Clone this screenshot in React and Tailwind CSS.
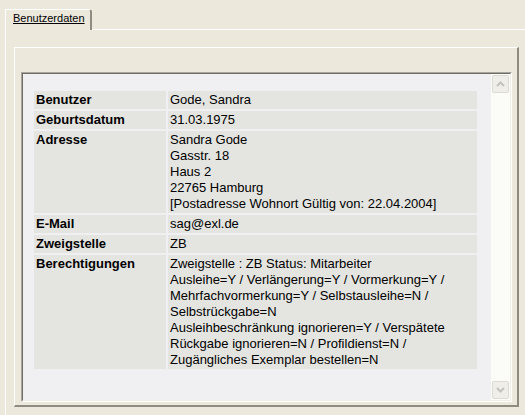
import React from "react";

const rows = [
  { label: "Benutzer", lines: ["Gode, Sandra"] },
  { label: "Geburtsdatum", lines: ["31.03.1975"] },
  {
    label: "Adresse",
    lines: [
      "Sandra Gode",
      "Gasstr. 18",
      "Haus 2",
      "22765 Hamburg",
      "[Postadresse Wohnort Gültig von: 22.04.2004]",
    ],
  },
  { label: "E-Mail", lines: ["sag@exl.de"] },
  { label: "Zweigstelle", lines: ["ZB"] },
  {
    label: "Berechtigungen",
    lines: [
      "Zweigstelle : ZB Status: Mitarbeiter",
      "Ausleihe=Y / Verlängerung=Y / Vormerkung=Y /",
      "Mehrfachvormerkung=Y / Selbstausleihe=N /",
      "Selbstrückgabe=N",
      "Ausleihbeschränkung ignorieren=Y / Verspätete",
      "Rückgabe ignorieren=N / Profildienst=N /",
      "Zugängliches Exemplar bestellen=N",
    ],
  },
];

function Chevron({ up }) {
  return (
    <svg width="9" height="6" viewBox="0 0 9 6">
      <path
        d={up ? "M1 5 L4.5 1.5 L8 5" : "M1 1 L4.5 4.5 L8 1"}
        fill="none"
        stroke="#c4c3bc"
        strokeWidth="2"
      />
    </svg>
  );
}

function ScrollButton({ up }) {
  return (
    <div className="ml-[1px] w-[17px] h-[18px] rounded-[2px] border border-[#dcdbd3] bg-[#efeee8] flex items-center justify-center">
      <Chevron up={up} />
    </div>
  );
}

export default function App() {
  return (
    <div className="w-[525px] h-[415px] bg-[#ece9dc] overflow-hidden pt-[9px] pl-[5px] font-['Liberation_Sans',Arial,sans-serif] text-black">
      <div className="flex h-[21px]">
        <div className="w-[87px] h-[21px] border-l border-t border-white border-r-2 border-r-[#8e8b80] rounded-tr-[3px] pl-[7px] pt-[2px] text-[11px] leading-[13px] underline">
          Benutzerdaten
        </div>
        <div className="flex-1 h-[21px] border-b border-white"></div>
      </div>
      <div className="border-l border-white pl-[8px] pt-[17px] h-[400px]">
        <div className="w-[505px] h-[360px] border-l border-t border-white border-r-2 border-b-2 border-r-[#8e8b80] border-b-[#8e8b80] pl-[6px] pt-[24px]">
          <div className="w-[491px] h-[330px] border-l border-t border-[#a7a59c] border-r border-b border-r-white border-b-white">
            <div className="w-full h-full border-l border-t border-[#6f6d66] border-r border-b border-r-[#f1efe2] border-b-[#f1efe2] flex">
              <div className="flex-1 bg-[#f0eff2] pl-[11px] pt-[17px]">
                <div className="grid grid-cols-[132px_309px] gap-[2px] text-[13px] leading-[16px]">
                  {rows.map((r) => (
                    <React.Fragment key={r.label}>
                      <div className="bg-[#e4e5e1] pl-[2px] py-[1px] font-bold">
                        {r.label}
                      </div>
                      <div className="bg-[#e4e5e1] pl-[2px] py-[1px]">
                        {r.lines.map((l, i) => (
                          <div key={i} className="whitespace-nowrap">
                            {l}
                          </div>
                        ))}
                      </div>
                    </React.Fragment>
                  ))}
                </div>
              </div>
              <div className="w-[19px] bg-[#fbfbf8] flex flex-col justify-between py-[1px]">
                <ScrollButton up />
                <ScrollButton />
              </div>
            </div>
          </div>
        </div>
      </div>
    </div>
  );
}
